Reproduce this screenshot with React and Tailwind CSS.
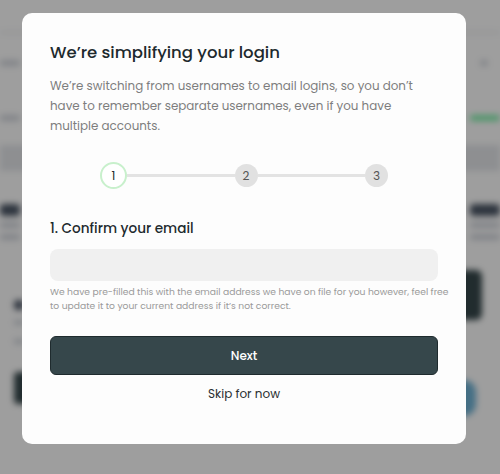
import React from "react";

const font = { fontFamily: '"Poppins", "Open Sans", "Noto Sans", sans-serif' };

function Background() {
  return (
    <div className="w-[500px] h-[474px] bg-white blur-[3px] flex flex-col">
      <div className="h-[33px] border-b border-gray-300 bg-white" />
      <div className="h-[60px] flex items-center justify-between">
        <div className="h-[6px] w-[20px] bg-gray-300 rounded" />
        <div className="h-[6px] w-[8px] bg-gray-300 rounded mr-[12px]" />
      </div>
      <div className="h-[50px] flex items-center justify-between">
        <div className="h-[6px] w-[20px] bg-gray-300 rounded" />
        <div className="h-[6px] w-[30px] bg-green-300 rounded" />
      </div>
      <div className="h-[26px] bg-gray-200 mt-[2px]" />
      <div className="flex justify-between mt-[30px]">
        <div className="flex flex-col gap-[6px]">
          <div className="h-[12px] w-[20px] bg-gray-600 rounded-sm mt-[3px]" />
          <div className="h-[6px] w-[20px] bg-gray-300 rounded" />
          <div className="h-[6px] w-[20px] bg-gray-300 rounded" />
        </div>
        <div className="flex flex-col gap-[6px] items-end">
          <div className="h-[12px] w-[30px] bg-gray-600 rounded-sm mt-[3px]" />
          <div className="h-[6px] w-[30px] bg-gray-300 rounded" />
          <div className="h-[6px] w-[30px] bg-gray-300 rounded" />
        </div>
      </div>
      <div className="flex justify-between mt-[20px]">
        <div className="flex flex-col pl-[14px] pt-[40px]">
          <div className="h-[10px] w-[10px] bg-gray-600 rounded-sm" />
          <div className="h-[5px] w-[10px] bg-gray-300 mt-[10px]" />
          <div className="h-[5px] w-[10px] bg-gray-300 mt-[14px]" />
          <div className="h-[32px] w-[20px] bg-[#36474b] rounded mt-[28px]" />
        </div>
        <div className="flex flex-col items-end">
          <div className="h-[50px] w-[26px] bg-[#36474b] rounded-[6px] mr-[18px] mt-[10px]" />
          <div className="h-[36px] w-[44px] bg-[#6fb3d6] rounded-[12px] mr-[24px] mt-[60px]" />
        </div>
      </div>
    </div>
  );
}

export default function App() {
  return (
    <div className="relative w-[500px] h-[474px] overflow-hidden" style={font}>
      <Background />
      <div className="absolute inset-0 bg-black/[0.38]" />
      <div className="absolute left-[22px] top-[13px] w-[444px] bg-[#fdfdfd] rounded-[10px] px-[28px] pt-[27px] pb-[41px] flex flex-col">
        <h1 className="text-[16.5px] leading-[26px] font-medium text-[#1d2a2e]">
          We’re simplifying your login
        </h1>
        <p className="mt-[10px] text-[11.9px] leading-[20px] text-[#7d7d7d]">
          We’re switching from usernames to email logins, so you don’t have to remember separate usernames, even if you have multiple accounts.
        </p>
        <div className="mt-[26px] flex items-center px-[50px]">
          <div className="w-[27px] h-[27px] rounded-full border-2 border-[#c8f0cc] bg-white flex items-center justify-center text-[12px] text-[#1d2a2e]">1</div>
          <div className="flex-1 h-[3px] bg-[#e3e3e3]" />
          <div className="w-[23px] h-[23px] rounded-full bg-[#e1e1e1] flex items-center justify-center text-[12px] text-[#555]">2</div>
          <div className="flex-1 h-[3px] bg-[#e3e3e3]" />
          <div className="w-[23px] h-[23px] rounded-full bg-[#e1e1e1] flex items-center justify-center text-[12px] text-[#555]">3</div>
        </div>
        <h2 className="mt-[29px] text-[13.6px] leading-[22px] font-medium text-[#1d2a2e]">
          1. Confirm your email
        </h2>
        <div className="mt-[9px] h-[32px] rounded-[8px] bg-[#f0f0f0]" />
        <p className="mt-[4px] mr-[-14px] text-[9.2px] leading-[14px] text-[#9a9a9a]">
          We have pre-filled this with the email address we have on file for you however, feel free to update it to your current address if it’s not correct.
        </p>
        <button className="mt-[23px] h-[39px] rounded-[6px] bg-[#36474b] border border-[#1f2b2e] text-white text-[12px] font-medium">
          Next
        </button>
        <button className="mt-[10px] text-[12px] leading-[18px] text-[#2a2f31]">Skip for now</button>
      </div>
    </div>
  );
}
